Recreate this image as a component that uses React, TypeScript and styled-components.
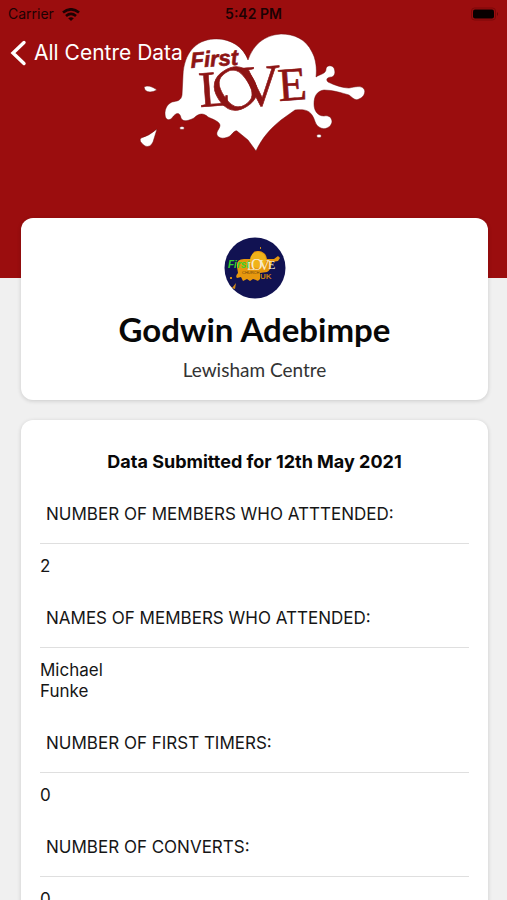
import React from "react";
import styled, { createGlobalStyle } from "styled-components";

const RED = "#9b0d0e";

const GlobalStyle = createGlobalStyle`
  * { box-sizing: border-box; }
  body {
    margin: 0;
    background: #f0f0f0;
    color: #161616;
    font-family: Inter, "Liberation Sans", sans-serif;
  }
`;

const Screen = styled.div`
  height: 100vh;
  overflow-x: hidden;
  overflow-y: auto;
  scrollbar-width: none;
`;

const Header = styled.header`
  position: relative;
  height: 278px;
  background: ${RED};
`;

const StatusBar = styled.div`
  display: grid;
  grid-template-columns: 1fr auto 1fr;
  align-items: center;
  height: 28px;
  padding: 0 8px;
  color: #1c0203;
  font-size: 14px;
  line-height: 20px;
`;

const Carrier = styled.span`
  display: flex;
  align-items: center;
  gap: 8px;
`;

const Clock = styled.time`
  font-weight: 600;
`;

const Battery = styled.svg`
  justify-self: end;
`;

const BackButton = styled.button`
  position: relative;
  z-index: 1;
  display: flex;
  align-items: center;
  gap: 6px;
  height: 50px;
  padding: 0 0 0 10px;
  border: 0;
  background: none;
  color: #fff;
  font: 400 21px/28px Inter, sans-serif;
  cursor: pointer;
`;

const Logo = styled.svg`
  position: absolute;
  top: 30px;
  left: 50%;
  transform: translateX(-50%);
`;

const Main = styled.main`
  position: relative;
  display: flex;
  flex-direction: column;
  gap: 20px;
  margin-top: -60px;
  padding: 0 19px 0 21px;
`;

const Card = styled.section`
  border-radius: 12px;
  background: #fff;
  box-shadow: 0 1px 4px rgba(0, 0, 0, 0.16);
`;

const ProfileCard = styled(Card)`
  display: flex;
  flex-direction: column;
  align-items: center;
  padding: 19px 20px 18px;
`;

const Name = styled.h1`
  margin: 10px 0 9px;
  color: #080808;
  font: 700 33px/40px Lato, sans-serif;
`;

const Centre = styled.p`
  margin: 0;
  color: #333;
  font: 400 19px/24px Lato, sans-serif;
`;

const DataCard = styled(Card)`
  padding: 30px 19px;
`;

const DataTitle = styled.h2`
  margin: 0 0 30px;
  color: #080808;
  font-size: 18px;
  line-height: 24px;
  font-weight: 700;
  text-align: center;
`;

const Entries = styled.dl`
  margin: 0;
  font-size: 17px;
  line-height: 21px;
`;

const Entry = styled.div`
  margin-bottom: 31px;
`;

const Label = styled.dt`
  margin-bottom: 12px;
  padding: 0 6px 18px;
  border-bottom: 1px solid #dfdfdf;
`;

const Value = styled.dd`
  margin: 0;
`;

const entries = [
  { label: "NUMBER OF MEMBERS WHO ATTTENDED:", values: ["2"] },
  { label: "NAMES OF MEMBERS WHO ATTENDED:", values: ["Michael", "Funke"] },
  { label: "NUMBER OF FIRST TIMERS:", values: ["0"] },
  { label: "NUMBER OF CONVERTS:", values: ["0"] },
];

const heart =
  "M248 60 C243 46 229 38 214 39 C195 40 184 54 183 75 L182 95 C181 101 177 101 172 102 C166 105 165 110 165 114 C165 120 169 121 172 118 C176 112 180 112 181 118 C183 123 190 120 194 118 C198 114 203 112 208 117 C212 119 219 121 220 125 C220 129 216 131 217 135 C219 139 225 139 230 136 C233 133 235 130 237 131 L248 140 L256 151 C262 138 270 129 281 120 L295 110 C303 109 309 110 312 115 C315 119 315 125 319 127 C325 131 331 127 332 122 C332 117 328 115 324 116 C317 116 314 110 314 104 C314 96 317 91 324 90 C333 90 342 93 349 95 C353 98 355 101 359 99 C364 97 366 92 364 89 C361 85 355 87 349 88 C343 88 334 85 328 82 C325 79 328 77 332 77 C336 75 335 71 334 68 C331 64 326 66 326 69 C326 74 320 74 316 77 C317 69 316 59 312 52 C306 39 294 34 281 34 C264 35 253 45 248 60 Z";

function ChurchLogo() {
  return (
    <Logo width="232" height="124" viewBox="138 30 232 124" role="img" aria-label="First Love">
      <g fill="#fff" stroke="#6f0708" strokeOpacity="0.6" strokeWidth="0.8">
        <path d={heart} />
        <path d="M144 87 Q149 84 157 90 Q149 94 145 90 Z" />
        <path d="M157 129 L153 142 Q150 148 145 146 Q138 141 141 138 Q149 136 157 129 Z" />
        <ellipse cx="182" cy="128" rx="2.4" ry="1.5" />
        <ellipse cx="319" cy="136" rx="2.4" ry="1.7" />
      </g>
      <g fill="#8d1414">
        <text
          transform="translate(191 68) rotate(-4)"
          fontFamily="Liberation Sans, sans-serif"
          fontWeight="700"
          fontStyle="italic"
          fontSize="22"
          stroke="#8d1414"
          strokeWidth="0.6"
        >
          First
        </text>
        <g fontFamily="Liberation Serif, serif" stroke="#8d1414" strokeWidth="0.6">
          <text transform="translate(200 107) rotate(-4)" fontSize="51">L</text>
          <text transform="translate(236 89) rotate(-32)" y="20" fontSize="63" textAnchor="middle">O</text>
          <text transform="translate(240 107) rotate(-4)" fontSize="59">V</text>
          <text transform="translate(279 101) rotate(-4)" fontSize="47">E</text>
        </g>
      </g>
    </Logo>
  );
}

function Avatar() {
  return (
    <svg width="62" height="62" viewBox="0 0 62 62" role="img" aria-label="First Love Church UK">
      <circle cx="31" cy="31" r="30.5" fill="#111252" />
      <path
        d="M13 30 Q12 22 20 22 L27 22 Q28 13 35 14 Q42 15 43 22 L50 22 L54 19 L56 21 L54 24 L48 25 Q47 33 43 35 L36 36 L36 42 Q34 45 32 43 L29 42 L26 44 L23 42 L19 44 L17 40 L13 41 Q11 39 14 36 Z"
        fill="#e7980e"
      />
      <circle cx="34" cy="23" r="8" fill="#f0b31a" />
      <path d="M8 51 L12 46 L11 52 Z M6 40 h2 v2 h-2 Z M36 10 h1 v2 h-1 Z" fill="#d18a18" />
      <text x="4" y="31" fill="#36d52b" fontFamily="Liberation Sans, sans-serif" fontSize="10" fontWeight="700" fontStyle="italic">
        First
      </text>
      <g fill="#f8ecd0" fontFamily="Liberation Serif, serif">
        <text x="23" y="33" fontSize="13">L</text>
        <text x="27" y="33" fontSize="16">O</text>
        <text x="35" y="33" fontSize="15">V</text>
        <text x="44" y="32" fontSize="12">E</text>
      </g>
      <text x="18" y="37" fill="#68420d" fontFamily="Liberation Sans, sans-serif" fontSize="4">
        CHURCH
      </text>
      <text x="36" y="42" fill="#c8800f" fontFamily="Liberation Sans, sans-serif" fontSize="8" fontWeight="700">
        UK
      </text>
    </svg>
  );
}

export default function App() {
  return (
    <Screen>
      <GlobalStyle />
      <Header>
        <StatusBar>
          <Carrier>
            Carrier
            <svg width="18" height="13" viewBox="0 0 18 13" fill="none" stroke="currentColor" strokeWidth="2.6" aria-hidden="true">
              <path d="M1 4.6 Q9 -2 17 4.6 M4 8 Q9 3.8 14 8" />
              <path d="M9 13 L6.2 10.3 Q9 8 11.8 10.3 Z" fill="currentColor" stroke="none" />
            </svg>
          </Carrier>
          <Clock>5:42 PM</Clock>
          <Battery width="28" height="14" viewBox="0 0 28 14" aria-hidden="true">
            <rect x="0.5" y="1" width="24" height="12" rx="3" fill="none" stroke="#7b0809" />
            <rect x="2" y="2.5" width="21" height="9" rx="2" fill="#080000" />
            <path d="M26 5 Q28 7 26 9 Z" fill="#660606" />
          </Battery>
        </StatusBar>
        <BackButton type="button">
          <svg width="18" height="26" viewBox="0 0 18 26" fill="none" stroke="currentColor" strokeWidth="3.4" strokeLinecap="round" aria-hidden="true">
            <path d="M14 2.5 L3 13 L14 23.5" />
          </svg>
          All Centre Data
        </BackButton>
        <ChurchLogo />
      </Header>
      <Main>
        <ProfileCard>
          <Avatar />
          <Name>Godwin Adebimpe</Name>
          <Centre>Lewisham Centre</Centre>
        </ProfileCard>
        <DataCard>
          <DataTitle>Data Submitted for 12th May 2021</DataTitle>
          <Entries>
            {entries.map((entry) => (
              <Entry key={entry.label}>
                <Label>{entry.label}</Label>
                {entry.values.map((value) => (
                  <Value key={value}>{value}</Value>
                ))}
              </Entry>
            ))}
          </Entries>
        </DataCard>
      </Main>
    </Screen>
  );
}
